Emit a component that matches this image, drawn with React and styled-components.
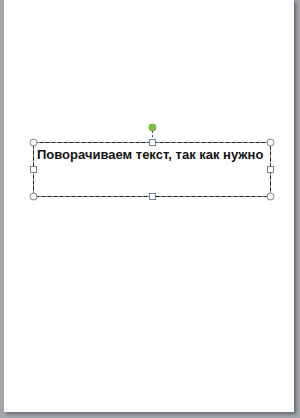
import React from 'react';
import styled, {createGlobalStyle} from 'styled-components';

const Global = createGlobalStyle`
  html, body {
    margin: 0;
    padding: 0;
    background: #a2a6aa;
    width: 300px;
    height: 418px;
    overflow: hidden;
  }
`;

const Desk = styled.div`
  display: flex;
  padding-left: 4px;
  height: 418px;
  box-sizing: border-box;
`;

const Page = styled.div`
  width: 290px;
  height: 412px;
  background: #ffffff;
  box-shadow: 2px 2px 3px rgba(60, 64, 68, 0.6);
  padding-top: 142px;
  padding-left: 29px;
  box-sizing: border-box;
`;

const Frame = styled.div`
  position: relative;
  width: 238px;
  height: 55px;
  box-sizing: border-box;
  padding: 5px 0 0 4px;
`;

const Caption = styled.div`
  font-family: "Liberation Sans", Arial, sans-serif;
  font-weight: bold;
  font-size: 13px;
  line-height: 15px;
  color: #111;
  white-space: nowrap;
`;

// selection adorner drawn over the text box
const Adorner = styled.svg`
  position: absolute;
  left: -8px;
  top: -22px;
  overflow: visible;
  pointer-events: none;
`;

function Handles() {
    const corners = [[8.5, 22.5], [245.5, 22.5], [8.5, 76.5], [245.5, 76.5]];
    const squares = [[127, 22.5], [127, 76.5], [8.5, 49.5], [245.5, 49.5]];
    return (
        <Adorner width="254" height="84" viewBox="0 0 254 84">
            <rect x="8.5" y="22.5" width="237" height="54" fill="none" stroke="#8fa2b4" strokeWidth="1"/>
            <rect x="8.5" y="22.5" width="237" height="54" fill="none" stroke="#222" strokeWidth="1" strokeDasharray="4 2"/>
            <line x1="127.5" y1="11" x2="127.5" y2="22" stroke="#4a4a4a" strokeDasharray="2 2"/>
            <circle cx="127.5" cy="7.5" r="3.5" fill="#7cc43e" stroke="#62a22e" strokeWidth="0.8"/>
            {corners.map(([x, y], i) => (
                <circle key={i} cx={x} cy={y} r="3.5" fill="#fff" stroke="#7d7d7d"/>
            ))}
            {squares.map(([x, y], i) => (
                <rect key={i} x={Math.floor(x) - 2.5} y={Math.floor(y) - 2.5} width="6" height="6" fill="#fff" stroke="#6f8499"/>
            ))}
        </Adorner>
    );
}

export default function App() {
    return (
        <Desk>
            <Global/>
            <Page>
                <Frame>
                    <Caption>Поворачиваем текст, так как нужно</Caption>
                    <Handles/>
                </Frame>
            </Page>
        </Desk>
    );
}
